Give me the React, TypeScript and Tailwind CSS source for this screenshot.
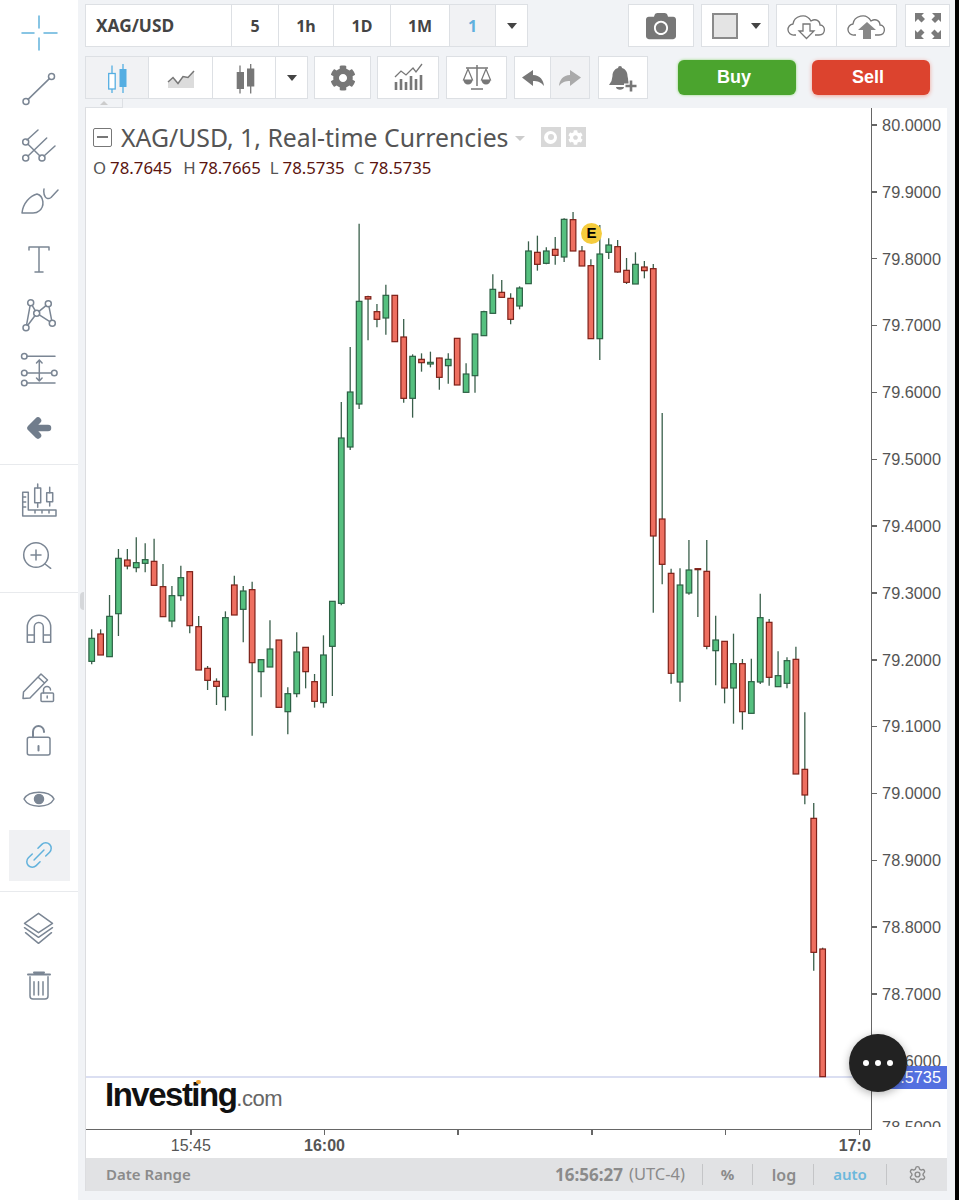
import React from 'react';
import { FaCamera, FaCog } from 'react-icons/fa';
import { Settings } from 'lucide-react';

type Raw = [string, number, number, number, number];

// measured as [colour, wick top, body top, body bottom, wick bottom] at 3x from a base y
const first: Raw[] = [
  ['g', 328, 355, 424, 433], ['r', 328, 342, 405, 405], ['g', 225, 289, 410, 410], ['g', 87, 115, 281, 348],
  ['r', 87, 120, 138, 148], ['g', 52, 128, 143, 157], ['g', 70, 119, 130, 157], ['r', 56, 124, 196, 196],
  ['r', 132, 200, 290, 290], ['g', 198, 227, 303, 322], ['g', 137, 173, 227, 242], ['r', 155, 155, 317, 340],
  ['r', 288, 320, 450, 450], ['r', 438, 445, 481, 510], ['r', 475, 484, 499, 555], ['g', 274, 293, 530, 572],
  ['r', 167, 195, 285, 285], ['g', 198, 213, 268, 367], ['r', 185, 209, 428, 647], ['g', 418, 419, 455, 532],
  ['g', 301, 387, 441, 441], ['r', 360, 360, 562, 562], ['g', 502, 521, 575, 643], ['g', 337, 396, 521, 532],
  ['r', 382, 382, 455, 505], ['r', 462, 485, 544, 563], ['g', 346, 405, 548, 563], ['g', 244, 244, 379, 528],
  ['g', -354, -246, 250, 256],
];
const second: Raw[] = [
  ['g', 441, 576, 741, 750], ['g', 71, 304, 612, 627], ['r', 287, 290, 297, 421], ['r', 312, 335, 358, 382],
  ['g', 254, 286, 354, 404], ['r', 286, 286, 425, 425], ['r', 357, 411, 595, 608], ['g', 463, 469, 595, 653],
  ['r', 460, 478, 488, 515], ['g', 455, 487, 492, 502], ['r', 473, 474, 532, 569], ['g', 460, 478, 497, 551],
  ['r', 415, 415, 555, 555], ['g', 490, 522, 577, 577], ['g', 402, 402, 527, 578], ['g', 332, 335, 407, 407],
  ['g', 223, 268, 340, 340], ['r', 240, 277, 292, 292], ['r', 280, 295, 358, 373], ['g', 259, 264, 318, 328],
  ['g', 124, 153, 251, 251], ['r', 107, 157, 193, 212], ['g', 142, 153, 190, 193], ['r', 111, 148, 166, 194],
  ['g', 55, 58, 171, 186], ['r', 36, 59, 153, 153], ['r', 138, 153, 198, 198], ['r', 178, 197, 416, 416],
  ['g', 75, 162, 416, 480], ['g', 115, 135, 157, 177], ['r', 120, 140, 216, 218], ['r', 174, 211, 247, 252],
  ['g', 157, 193, 252, 252], ['r', 183, 201, 212, 235], ['r', 192, 206, 1008, 1238],
];
const third: Raw[] = [
  ['r', -261, 57, 193, 253], ['r', 206, 220, 520, 551], ['g', 205, 255, 546, 605], ['g', 120, 210, 279, 284],
  ['r', 206, 206, 209, 351], ['r', 120, 214, 439, 448], ['g', 347, 420, 452, 556], ['r', 424, 424, 564, 610],
  ['g', 401, 491, 564, 671], ['r', 477, 491, 635, 689], ['g', 476, 545, 640, 640], ['g', 281, 353, 546, 552],
  ['r', 357, 367, 532, 557], ['g', 454, 527, 560, 560], ['g', 472, 482, 550, 565],
];
const fourth: Raw[] = [
  ['r', 20, 58, 402, 402], ['r', 217, 388, 465, 493], ['r', 489, 535, 937, 992], ['r', 923, 927, 1310, 1310],
];

const candles = [
  ...first.map((c) => ({ c, base: 520 })),
  ...second.map((c) => ({ c, base: 200 })),
  ...third.map((c) => ({ c, base: 500 })),
  ...fourth.map((c) => ({ c, base: 640 })),
].map(({ c, base }, i) => ({
  up: c[0] === 'g',
  x: 90.7 + 8.914 * i,
  wickTop: base + c[1] / 3,
  top: base + c[2] / 3,
  bottom: base + c[3] / 3,
  wickBottom: base + c[4] / 3,
}));

const prices = [
  '80.0000', '79.9000', '79.8000', '79.7000', '79.6000', '79.5000', '79.4000', '79.3000',
  '79.2000', '79.1000', '79.0000', '78.9000', '78.8000', '78.7000', '78.6000', '78.5000',
];

const Icon = ({ children, color = '#7b8694' }: { children: React.ReactNode; color?: string }) => (
  <svg width="40" height="40" viewBox="0 0 40 40" fill="none" stroke={color} strokeWidth="1.5" strokeLinecap="round" strokeLinejoin="round">
    {children}
  </svg>
);

const Small = ({ children, size = 32 }: { children: React.ReactNode; size?: number }) => (
  <svg width={size} height={size} viewBox={`0 0 ${size} ${size}`} fill="none">
    {children}
  </svg>
);

const Sidebar = () => (
  <div className="relative flex h-[1200px] w-[78px] shrink-0 flex-col bg-white">
    {/* drawing tools */}
    <div className="flex h-[464px] flex-col items-center gap-[16.4px] pt-[13px]">
      <Icon color="#62b2dc">
        <path d="M20 3v12M20 25v12M3 20h12M25 20h13" />
      </Icon>
      <Icon>
        <circle cx="32.5" cy="7.5" r="3" />
        <circle cx="7" cy="32.5" r="3" />
        <path d="M30.4 9.6 9.1 30.4" />
      </Icon>
      <Icon>
        <circle cx="6.7" cy="16" r="3" />
        <circle cx="6.7" cy="32" r="3" />
        <circle cx="23" cy="32" r="3" />
        <path d="M8 14 19 4M9 18.2l12 11.8M9 30l18.7-18M25 30l11-10" />
      </Icon>
      <Icon>
        <path d="M3 31C4 21 11 14 18 12c7 2 8 12.500 2 17-1.500 1.500-3 2-6 2Z" />
        <path d="M25 7c-1 6 2 12 7 8.500L39 8" />
      </Icon>
      <Icon>
        <path d="M10 11V8h20v3M20 8v25M16 33h8" />
      </Icon>
      <Icon>
        <circle cx="11.700" cy="7.700" r="3" />
        <circle cx="29.300" cy="8.700" r="3" />
        <circle cx="17.700" cy="18.300" r="3" />
        <circle cx="7" cy="32.700" r="3" />
        <circle cx="33.300" cy="28.300" r="3" />
        <path d="M7.600 29.700 11.100 10.700M13.200 10.300l3 5.400M15.900 20.700 8.800 30.300M20 16.400l7-5.800M30 11.600l2.700 13.700M20.300 19.900l10.500 6.800" />
      </Icon>
      <Icon>
        <circle cx="5.300" cy="5.300" r="2.800" />
        <circle cx="5.300" cy="22" r="2.800" />
        <circle cx="5.300" cy="32" r="2.800" />
        <circle cx="35.300" cy="22" r="2.800" />
        <path d="M8 5.300h28M8 22h24.500M8 32h28M20.300 9v21M17.500 12l2.800-3 2.800 3M17.500 27l2.800 3 2.800-3" />
      </Icon>
      <Icon color="#717d8c">
        <path strokeWidth="6.500" d="M29 20H13M19 12.500 11.500 20l7.500 7.500" />
      </Icon>
    </div>

    {/* chart helpers */}
    <div className="flex h-[128px] flex-col items-center gap-[15px] border-t border-[#e8eaed] pt-[16px]">
      <Icon>
        <path d="M3.700 11.300h5.600V29H37v6H3.700ZM16 29v3M23 29v3M30 29v3M3.700 16h3M3.700 21h3M3.700 26h3" />
        <rect x="15.700" y="7" width="6" height="14.700" />
        <path d="M18.700 3v4M18.700 21.700v4.600" />
        <rect x="27.700" y="11.700" width="6" height="9" />
        <path d="M30.700 6.300v5.400M30.700 20.700V25" />
      </Icon>
      <Icon>
        <circle cx="17" cy="19" r="12.300" />
        <path d="M17 14v10M12 19h10M26 28l5.700 4.300" />
      </Icon>
    </div>

    {/* locks and visibility */}
    <div className="flex h-[299px] flex-col items-center gap-[16.500px] border-t border-[#e8eaed] pt-[16px]">
      <Icon>
        <path d="M8.300 33.300V18a11.700 11.700 0 0 1 23.400 0v15.300h-7.400V18a4.500 4.500 0 0 0-9 0v15.300ZM8.300 26h7M24.300 26h7.400" />
      </Icon>
      <Icon>
        <path d="M4 32.500 4.500 26 22 8l6.500 6L11 32ZM19 11l6.500 6" />
        <rect x="22" y="27" width="12.500" height="8.500" rx="1" />
        <path d="M24.500 27v-3a3.500 3.500 0 0 1 7 0M28.200 30v2" />
      </Icon>
      <Icon>
        <rect x="8.300" y="15.300" width="22.700" height="17.700" rx="2" />
        <path d="M14 15.300V9.500a5.500 5.500 0 0 1 11 0v.5M19.500 24v4.500" strokeWidth="2" />
      </Icon>
      <Icon>
        <path d="M5 20c5-9 25-9 30 0-5 9.500-25 9.500-30 0Z" />
        <circle cx="20" cy="20" r="4.500" fill="#7b8694" />
      </Icon>
      <div className="-my-[5.500px] flex h-[51px] w-[61px] items-center justify-center bg-[#f0f1f3]">
        <Icon color="#62b2dc">
          <g transform="rotate(-45 20 20)">
            <path d="M16 14.500h-5.500a5.500 5.500 0 0 0 0 11H16M24 14.500h5.500a5.500 5.500 0 0 1 0 11H24M13 20h14" />
          </g>
        </Icon>
      </div>
    </div>

    {/* layers and delete */}
    <div className="flex flex-col items-center gap-[16px] border-t border-[#e8eaed] pt-[17px]">
      <Icon>
        <path d="M19.500 4.300 33.500 14.300 19.500 23.700 5.500 14.300ZM5.500 18.700l14 9.600 14-9.600M6.500 23.700l13 10.600 13-10.600" />
      </Icon>
      <Icon>
        <path d="M9 9.500h22M15 7.500h10" strokeWidth="2" />
        <path d="M11 11.700V31a3 3 0 0 0 3 3h12a3 3 0 0 0 3-3V11.700M15 16.700V30M19.500 16.700V30M24 16.700V30" />
      </Icon>
    </div>

    <div className="absolute top-[592px] right-[-6px] h-[18px] w-[4px] rounded-l-sm bg-[#d5d7da]" />
  </div>
);

const Btn = ({ className = '', active = false, children }: { className?: string; active?: boolean; children?: React.ReactNode }) => (
  <div className={`flex h-full items-center justify-center border border-[#dde0e4] ${active ? 'bg-[#f1f2f4]' : 'bg-white'} ${className}`}>
    {children}
  </div>
);

const Caret = () => <div className="h-0 w-0 border-x-[5.500px] border-t-[6px] border-x-transparent border-t-[#444]" />;

const TopRow = () => (
  <div className="mt-[4px] flex h-[43px] font-['Noto_Sans',sans-serif] text-[16px] font-bold text-[#444]">
    <Btn className="w-[147px] justify-start pl-[10px] text-[17.300px]">XAG/USD</Btn>
    <Btn className="w-[47px] border-l-0">5</Btn>
    <Btn className="w-[55px] border-l-0">1h</Btn>
    <Btn className="w-[57px] border-l-0">1D</Btn>
    <Btn className="w-[59px] border-l-0">1M</Btn>
    <Btn active className="w-[46px] border-l-0 text-[#5fb0de]">1</Btn>
    <Btn className="w-[32px] border-l-0">
      <Caret />
    </Btn>
    <Btn className="ml-[100px] w-[66px] text-[#777]">
      <FaCamera size={30} />
    </Btn>
    <Btn className="ml-[7px] w-[68px] gap-[13px] pl-[2px]">
      <div className="h-[26px] w-[26px] border-2 border-[#8a8a8a] bg-[#e4e4e4]" />
      <Caret />
    </Btn>
    <Btn className="ml-[7px] w-[61px]">
      <svg width="40" height="28" viewBox="0 0 40 28" fill="none" stroke="#777" strokeWidth="1.300">
        <path d="M9 23H7a5.500 5.500 0 0 1-1-11c1-8 13-12 18-3 5-3 9 0 9 4 6 0 6 10-1 10h-4" />
        <path d="M16 12h7v7h4l-7.500 7.500L12 19h4Z" fill="#fff" />
      </svg>
    </Btn>
    <Btn className="w-[60px] border-l-0">
      <svg width="40" height="28" viewBox="0 0 40 28" fill="none" stroke="#777" strokeWidth="1.300">
        <path d="M9 23H7a5.500 5.500 0 0 1-1-11c1-8 13-12 18-3 5-3 9 0 9 4 6 0 6 10-1 10h-4" />
        <path d="M16 27v-9h-5l9-8 9 8h-5v9Z" fill="#888" stroke="none" />
      </svg>
    </Btn>
    <Btn className="ml-[8px] w-[45px]">
      <svg width="28" height="28" viewBox="0 0 28 28" fill="#7a7a7a">
        <path d="M1 1h9L7.500 3.500 11 7l-3.500 3.500L4 7l-3 3ZM27 1v9l-2.500-2.500L21 11l-3.500-3.500L21 4l-3-3ZM1 27v-9l2.500 2.500L7 17l3.500 3.500L7 24l3 3ZM27 27h-9l2.500-2.500L17 21l3.500-3.500L24 21l3-3Z" />
      </svg>
    </Btn>
  </div>
);

const SecondRow = () => (
  <div className="mt-[9px] flex h-[43px]">
    <Btn active className="w-[64px]">
      <Small>
        <rect x="7.700" y="11.500" width="6.500" height="15.500" fill="#fff" stroke="#55aee2" strokeWidth="1.300" />
        <path d="M11 3.500v8M11 27v4M22 2v5M22 25v6" stroke="#55aee2" strokeWidth="1.300" />
        <rect x="18.500" y="7" width="7" height="18" fill="#55aee2" />
      </Small>
    </Btn>
    <Btn className="w-[64px] border-l-0">
      <Small>
        <path d="M3 20l5-4.500 5 6 5-7 5 1 6-6.500V26H3Z" fill="#dcdcdc" />
        <path d="M3 20l5-4.500 5 6 5-7 5 1 6-6.500" stroke="#777" strokeWidth="1.500" />
      </Small>
    </Btn>
    <Btn className="w-[63px] border-l-0">
      <Small>
        <rect x="8.700" y="10" width="7.300" height="17" fill="#777" />
        <rect x="19" y="6.500" width="7.300" height="18" fill="#777" />
        <path d="M12 3.500v28M22.700 2v29.500" stroke="#777" strokeWidth="1.300" />
      </Small>
    </Btn>
    <Btn className="w-[32px] border-l-0">
      <Caret />
    </Btn>
    <Btn className="ml-[6px] w-[57px] text-[#777]">
      <FaCog size={26} />
    </Btn>
    <Btn className="ml-[6px] w-[62px]">
      <Small>
        <path d="M4 20v8M9 17v11M14 20v8M19 14v14M24 17v11M29 13v15" stroke="#777" strokeWidth="2.600" />
        <path d="M3 15l6-6 5 4 7-7 3 4 6-8" stroke="#777" strokeWidth="1.300" />
      </Small>
    </Btn>
    <Btn className="ml-[7px] w-[61px]">
      <Small>
        <path d="M16 3v21M5 6h22M10 27h12" stroke="#777" strokeWidth="1.500" />
        <path d="M7 7 2.500 18h9ZM25 7l-4.500 11h9Z" stroke="#777" strokeWidth="1.200" />
        <path d="M2.500 18a4.500 4.500 0 0 0 9 0ZM20.500 18a4.500 4.500 0 0 0 9 0Z" fill="#777" />
      </Small>
    </Btn>
    <Btn className="ml-[7px] w-[37px]">
      <svg width="24" height="24" viewBox="0 0 24 24" fill="#777">
        <path d="M1 11.500 12 4v5c7 0 10.500 5 11 11-3-4-6.500-5-11-5v5Z" />
      </svg>
    </Btn>
    <Btn active className="w-[39px] border-l-0">
      <svg width="24" height="24" viewBox="0 0 24 24" fill="#aaa">
        <path d="M23 11.500 12 4v5C5 9 1.500 14 1 20c3-4 6.500-5 11-5v5Z" />
      </svg>
    </Btn>
    <Btn className="ml-[8px] w-[50px]">
      <Small>
        <path d="M11 6a2 2 0 0 1 4 0c3.500 1 5.500 4 5.500 8l1 5 2.500 4H2l2.500-4 1-5c0-4 2-7 5.500-8ZM9 25h8c0 3.500-8 3.500-8 0Z" fill="#777" />
        <path d="M17 24h14M24 17v14" stroke="#fff" strokeWidth="5" />
        <path d="M18.500 24h11M24 18.500v11" stroke="#777" strokeWidth="2.600" />
      </Small>
    </Btn>
    <div className="ml-[30px] flex h-full items-center gap-[16px] font-['Liberation_Sans',sans-serif] text-[18px] font-bold text-white">
      <div className="flex h-[35px] w-[118px] items-center justify-center rounded-[6px] bg-[#4ba42e] pr-[6px] shadow-[0_0_3px_#8fd875]">Buy</div>
      <div className="flex h-[35px] w-[118px] items-center justify-center rounded-[6px] bg-[#dc432e] pr-[6px] shadow-[0_1px_4px_#f0a095]">Sell</div>
    </div>
  </div>
);

const Candles = () => (
  <svg className="absolute inset-0" width="787" height="1022" viewBox="85 108 787 1022">
    <line x1="85" x2="872" y1="1077" y2="1077" stroke="#cfd4ee" strokeWidth="1.500" />
    {candles.map((d, i) => (
      <g key={i}>
        <line x1={d.x} x2={d.x} y1={d.wickTop} y2={d.wickBottom} stroke="#3a5f4b" strokeWidth="1.300" />
        <rect
          x={d.x - 2.800}
          y={d.top}
          width="5.600"
          height={Math.max(d.bottom - d.top, 1)}
          fill={d.up ? '#55c07f' : '#ee6f60'}
          stroke={d.up ? '#2c6044' : '#7d2018'}
          strokeWidth="1.200"
        />
      </g>
    ))}
  </svg>
);

const ChartHeader = () => (
  <div className="absolute top-[16px] left-[7px] font-['Noto_Sans',sans-serif] text-[#555]">
    <div className="flex h-[26px] items-center">
      <div className="flex h-[19px] w-[19px] items-center justify-center rounded-[2px] border-[1.500px] border-[#777]">
        <div className="h-[1.500px] w-[11px] bg-[#777]" />
      </div>
      <span className="ml-[9px] text-[24.800px] leading-[26px] whitespace-nowrap">XAG/USD, 1, Real-time Currencies</span>
      <div className="mt-[2px] ml-[6px] h-0 w-0 border-x-[5px] border-t-[5px] border-x-transparent border-t-[#ccc]" />
      <div className="ml-[16px] flex h-[20px] w-[20px] items-center justify-center bg-[#d8d8d8]">
        <div className="flex h-[13px] w-[13px] items-center justify-center rounded-full bg-white">
          <div className="h-[6px] w-[6px] rounded-full bg-[#d8d8d8]" />
        </div>
      </div>
      <div className="ml-[5px] flex h-[20px] w-[20px] items-center justify-center bg-[#d8d8d8] text-white">
        <FaCog size={15} />
      </div>
    </div>
    <div className="mt-[7px] flex text-[16.800px] leading-[22px] whitespace-nowrap">
      <span>O</span>
      <span className="ml-[4px] text-[#5b1510]">78.7645</span>
      <span className="ml-[11px]">H</span>
      <span className="ml-[3px] text-[#5b1510]">78.7665</span>
      <span className="ml-[9px]">L</span>
      <span className="ml-[4px] text-[#5b1510]">78.5735</span>
      <span className="ml-[9px]">C</span>
      <span className="ml-[5px] text-[#5b1510]">78.5735</span>
    </div>
  </div>
);

const Watermark = () => (
  <div className="absolute top-[967px] left-[19px] flex items-baseline font-['Liberation_Sans',sans-serif] whitespace-nowrap">
    <span className="relative text-[33px] leading-[40px] font-bold tracking-[-1.500px] text-[#111]">
      Investing
      <span className="absolute top-[5px] left-[91px] h-[4px] w-[5px] rounded-full bg-[#f0a030]" />
    </span>
    <span className="text-[22px] leading-[40px] tracking-[-0.500px] text-[#666]">.com</span>
  </div>
);

const PriceAxis = () => (
  <div className="relative h-[1019px] w-[75px] overflow-hidden font-['Liberation_Sans',sans-serif] text-[16.300px] text-[#555]">
    <div className="-mt-[16.400px]">
      {prices.map((p) => (
        <div key={p} className="flex h-[66.850px] items-center">
          <div className="h-[1.500px] w-[5px] bg-[#666]" />
          <span className="ml-[5px]">{p}</span>
        </div>
      ))}
    </div>
    <div className="absolute top-[958px] left-0 flex h-[23px] w-full items-center bg-[#5470e0] pl-[10px] text-white">
      78.5735
    </div>
  </div>
);

const TimeAxis = () => (
  <div className="flex h-[28px] w-[785px] overflow-hidden pl-[38px] font-['Liberation_Sans',sans-serif] text-[16px] text-[#555]">
    {['15:45', '16:00', '', '', '', '17:00'].map((t, i) => (
      <div key={i} className="flex w-[133.700px] shrink-0 flex-col items-center">
        <div className="h-[5px] w-[1.500px] bg-[#666]" />
        <span className={`mt-[1px] leading-[20px] ${t === '15:45' ? '' : 'font-bold'}`}>{t}</span>
      </div>
    ))}
  </div>
);

const StatusBar = () => (
  <div className="flex h-[33px] items-center bg-[#e1e2e4] pl-[20px] font-['Noto_Sans',sans-serif] text-[15px] font-semibold text-[#8b8b8b]">
    <span>Date Range</span>
    <span className="ml-auto text-[17px] font-bold">16:56:27</span>
    <span className="ml-[6px] text-[16.500px] font-normal">(UTC-4)</span>
    <div className="ml-[17px] h-[21px] w-px bg-[#c4c5c7]" />
    <span className="w-[49px] text-center font-bold">%</span>
    <div className="h-[21px] w-px bg-[#c4c5c7]" />
    <span className="w-[60px] pl-[2px] text-center text-[16px]">log</span>
    <div className="h-[21px] w-px bg-[#c4c5c7]" />
    <span className="w-[72px] text-center text-[#6cb8dc]">auto</span>
    <div className="h-[21px] w-px bg-[#c4c5c7]" />
    <div className="flex w-[60px] justify-center">
      <Settings size={19} strokeWidth={1.800} />
    </div>
  </div>
);

const App = () => (
  <div className="relative flex h-[1200px] w-[959px] overflow-hidden bg-[#f1f3f6]">
    <Sidebar />
    <div className="ml-[7px] flex w-[866px] flex-col">
      <div className="w-[865px]">
        <TopRow />
        <SecondRow />
      </div>
      {/* scroll handle above the chart */}
      <div className="flex h-[9px] w-[38px] items-center justify-center border-r border-b border-[#dde0e4]">
        <div className="h-0 w-0 border-x-[4px] border-b-[4px] border-x-transparent border-b-[#ccc]" />
      </div>
      <div className="w-[862px] border-l border-[#dcdde0] bg-white">
        <div className="flex">
          <div className="relative h-[1022px] w-[787px] border-r-[1.500px] border-b-[1.500px] border-[#666]">
            <Candles />
            <ChartHeader />
            <Watermark />
            {/* earnings marker */}
            <div className="absolute top-[115px] left-[495px] flex h-[21px] w-[21px] items-center justify-center rounded-full bg-[#f5cc3d] font-['Liberation_Sans',sans-serif] text-[15px] font-bold text-black">
              E
            </div>
          </div>
          <PriceAxis />
        </div>
        <TimeAxis />
        <StatusBar />
      </div>
    </div>
    <div className="absolute top-0 right-0 h-full w-[4px] bg-black" />
    <div className="absolute top-[1034px] left-[849px] flex h-[58px] w-[58px] items-center justify-center gap-[6px] rounded-full bg-[#222] shadow-[0_2px_8px_rgba(0,0,0,0.3)]">
      <div className="h-[6px] w-[6px] rounded-full bg-white" />
      <div className="h-[6px] w-[6px] rounded-full bg-white" />
      <div className="h-[6px] w-[6px] rounded-full bg-white" />
    </div>
  </div>
);

export default App;
